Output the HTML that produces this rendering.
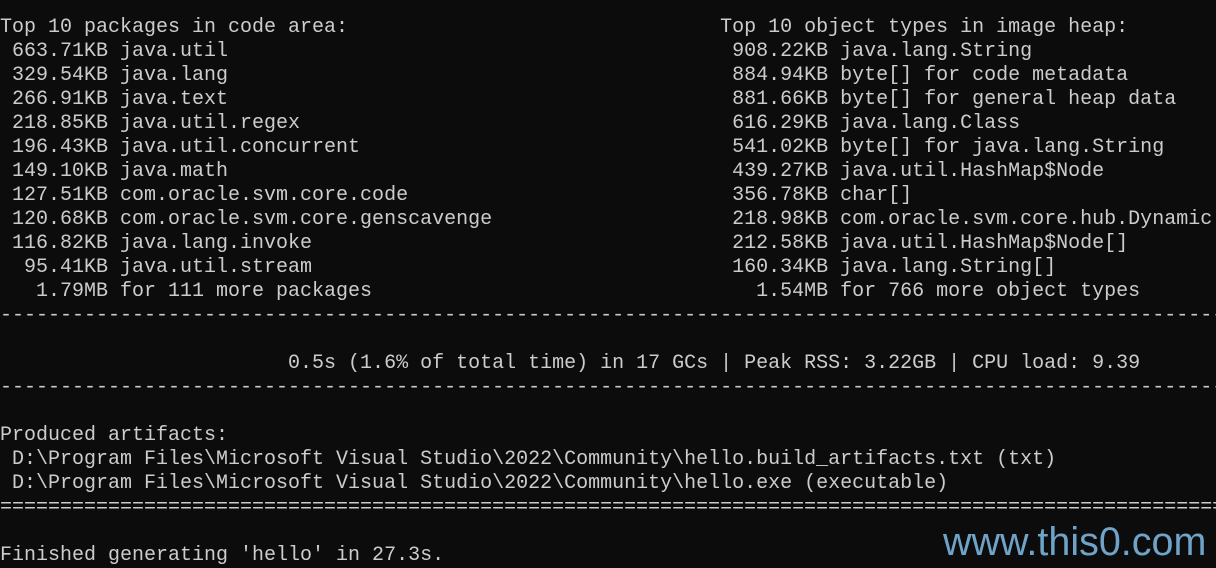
<!DOCTYPE html><html><head><style>
html,body{margin:0;background:#0c0c0c;width:1216px;height:568px;overflow:hidden}
pre{position:absolute;left:0;top:16px;width:1216px;overflow:hidden;margin:0;font:20px/24px "Liberation Mono",monospace;color:#cccccc;white-space:pre}
.w{position:absolute;left:943px;top:520px;font:39.5px "Liberation Sans",sans-serif;color:#6fa3c8}
</style></head><body><pre>Top 10 packages in code area:                               Top 10 object types in image heap:
 663.71KB java.util                                          908.22KB java.lang.String
 329.54KB java.lang                                          884.94KB byte[] for code metadata
 266.91KB java.text                                          881.66KB byte[] for general heap data
 218.85KB java.util.regex                                    616.29KB java.lang.Class
 196.43KB java.util.concurrent                               541.02KB byte[] for java.lang.String
 149.10KB java.math                                          439.27KB java.util.HashMap$Node
 127.51KB com.oracle.svm.core.code                           356.78KB char[]
 120.68KB com.oracle.svm.core.genscavenge                    218.98KB com.oracle.svm.core.hub.Dynamic
 116.82KB java.lang.invoke                                   212.58KB java.util.HashMap$Node[]
  95.41KB java.util.stream                                   160.34KB java.lang.String[]
   1.79MB for 111 more packages                                1.54MB for 766 more object types
---------------------------------------------------------------------------------------------------------

                        0.5s (1.6% of total time) in 17 GCs | Peak RSS: 3.22GB | CPU load: 9.39
---------------------------------------------------------------------------------------------------------

Produced artifacts:
 D:\Program Files\Microsoft Visual Studio\2022\Community\hello.build_artifacts.txt (txt)
 D:\Program Files\Microsoft Visual Studio\2022\Community\hello.exe (executable)
=========================================================================================================

Finished generating 'hello' in 27.3s.</pre><div class="w">www.this0.com</div></body></html>
